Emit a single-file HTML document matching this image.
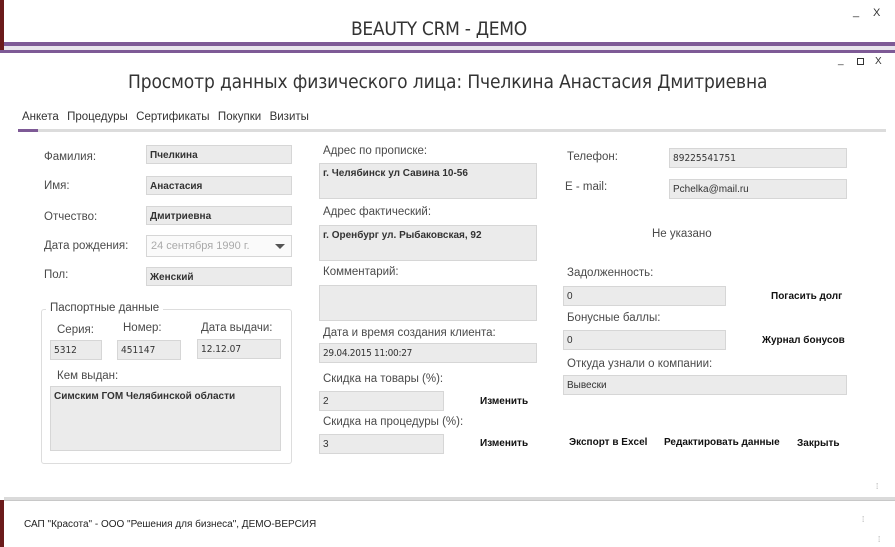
<!DOCTYPE html>
<html><head><meta charset="utf-8"><style>
*{margin:0;padding:0;box-sizing:border-box}
body{width:895px;height:547px;overflow:hidden;background:#fff;position:relative;font-family:"Liberation Sans","DejaVu Sans",sans-serif;color:#333}
.a{position:absolute;white-space:nowrap}
.l{position:absolute;font-size:11.5px;color:#4a4a4a;white-space:nowrap}
.f{position:absolute;background:#ebebeb;border:1px solid #d6d6d6;font-size:10px;font-weight:bold;color:#333;padding:4px 0 0 3px;white-space:nowrap;overflow:hidden}
.b{position:absolute;font-size:10px;font-weight:bold;color:#111;white-space:nowrap}
</style></head><body>
<div class="a" style="left:0;top:0;width:4px;height:50px;background:#6b1a1a"></div>
<div class="a" style="left:0;top:500px;width:4px;height:47px;background:#6b1a1a"></div>
<div class="a" style="left:4px;top:42px;width:891px;height:4px;background:#7e5a96"></div>
<div class="a" style="left:4px;top:46px;width:891px;height:4px;background:#e8e4ec"></div>
<div class="a" style="left:0;top:50px;width:895px;height:3px;background:#7e5a96"></div>
<div class="a" style="left:351px;top:18px;font-size:19px;letter-spacing:-0.3px;color:#333;font-family:'DejaVu Sans Condensed','Liberation Sans Narrow',sans-serif;font-weight:300">BEAUTY CRM - ДЕМО</div>
<div class="a" style="left:853px;top:6px;font-size:11px">_</div>
<div class="a" style="left:873px;top:7px;font-size:11px">X</div>
<div class="a" style="left:838px;top:55px;font-size:10px">_</div>
<div class="a" style="left:857px;top:58px;width:7px;height:7px;border:1px solid #333"></div>
<div class="a" style="left:875px;top:56px;font-size:10px">X</div>
<div class="a" style="left:128px;top:71px;font-size:19px;letter-spacing:-0.13px;color:#333;font-family:'DejaVu Sans Condensed','Liberation Sans Narrow',sans-serif;font-weight:300">Просмотр данных физического лица: Пчелкина Анастасия Дмитриевна</div>
<div class="a" style="left:22px;top:111px;font-size:11.5px;color:#333;word-spacing:1px">Анкета&nbsp; Процедуры&nbsp; Сертификаты&nbsp; Покупки&nbsp; Визиты</div>
<div class="a" style="left:18px;top:129px;width:868px;height:3px;background:#dcdcdc"></div>
<div class="a" style="left:18px;top:129px;width:20px;height:3px;background:#7e5a96"></div>

<div class="l" style="left:44px;top:151px">Фамилия:</div>
<div class="l" style="left:44px;top:180px">Имя:</div>
<div class="l" style="left:44px;top:211px">Отчество:</div>
<div class="l" style="left:44px;top:240px">Дата рождения:</div>
<div class="l" style="left:44px;top:269px">Пол:</div>
<div class="f" style="left:146px;top:145px;width:146px;height:19px">Пчелкина</div>
<div class="f" style="left:146px;top:176px;width:146px;height:19px">Анастасия</div>
<div class="f" style="left:146px;top:206px;width:146px;height:19px">Дмитриевна</div>
<div class="f" style="left:146px;top:235px;width:146px;height:22px;background:#fafafa;color:#aaa;font-weight:normal;font-size:11px;padding-top:4px;padding-left:4px">24 сентября 1990 г.</div>
<div class="a" style="left:275px;top:244px;border-left:5px solid transparent;border-right:5px solid transparent;border-top:5px solid #555"></div>
<div class="f" style="left:146px;top:267px;width:146px;height:19px">Женский</div>

<div class="a" style="left:41px;top:309px;width:251px;height:155px;border:1px solid #ddd;border-radius:3px"></div>
<div class="a" style="left:46px;top:302px;background:#fff;padding:0 4px;font-size:11.5px;color:#444">Паспортные данные</div>
<div class="l" style="left:57px;top:324px">Серия:</div>
<div class="l" style="left:123px;top:322px">Номер:</div>
<div class="l" style="left:201px;top:322px">Дата выдачи:</div>
<div class="f" style="left:50px;top:340px;width:52px;height:20px;font-weight:normal;font-family:'DejaVu Sans Condensed',sans-serif">5312</div>
<div class="f" style="left:117px;top:340px;width:64px;height:20px;font-weight:normal;font-family:'DejaVu Sans Condensed',sans-serif">451147</div>
<div class="f" style="left:197px;top:339px;width:84px;height:20px;font-weight:normal;font-family:'DejaVu Sans Condensed',sans-serif">12.12.07</div>
<div class="l" style="left:57px;top:370px">Кем выдан:</div>
<div class="f" style="left:50px;top:386px;width:231px;height:65px">Симским ГОМ Челябинской области</div>

<div class="l" style="left:323px;top:145px">Адрес по прописке:</div>
<div class="f" style="left:319px;top:163px;width:218px;height:36px">г. Челябинск ул Савина 10-56</div>
<div class="l" style="left:323px;top:206px">Адрес фактический:</div>
<div class="f" style="left:319px;top:225px;width:218px;height:36px">г. Оренбург ул. Рыбаковская, 92</div>
<div class="l" style="left:323px;top:266px">Комментарий:</div>
<div class="f" style="left:319px;top:285px;width:218px;height:36px"></div>
<div class="l" style="left:323px;top:327px">Дата и время создания клиента:</div>
<div class="f" style="left:319px;top:343px;width:218px;height:20px;font-weight:normal;font-family:'DejaVu Sans Condensed',sans-serif;letter-spacing:-0.3px">29.04.2015 11:00:27</div>
<div class="l" style="left:323px;top:373px">Скидка на товары (%):</div>
<div class="f" style="left:319px;top:391px;width:125px;height:20px;font-weight:normal">2</div>
<div class="l" style="left:323px;top:416px">Скидка на процедуры (%):</div>
<div class="f" style="left:319px;top:434px;width:125px;height:20px;font-weight:normal">3</div>
<div class="b" style="left:480px;top:396px">Изменить</div>
<div class="b" style="left:480px;top:438px">Изменить</div>

<div class="l" style="left:567px;top:151px">Телефон:</div>
<div class="l" style="left:565px;top:181px">E - mail:</div>
<div class="f" style="left:669px;top:148px;width:178px;height:20px;font-weight:normal;font-family:'DejaVu Sans Condensed',sans-serif">89225541751</div>
<div class="f" style="left:669px;top:179px;width:178px;height:20px;font-weight:normal">Pchelka@mail.ru</div>
<div class="l" style="left:652px;top:228px">Не указано</div>
<div class="l" style="left:567px;top:267px">Задолженность:</div>
<div class="f" style="left:563px;top:286px;width:163px;height:20px;font-weight:normal">0</div>
<div class="b" style="left:771px;top:291px">Погасить долг</div>
<div class="l" style="left:567px;top:312px">Бонусные баллы:</div>
<div class="f" style="left:563px;top:330px;width:163px;height:20px;font-weight:normal">0</div>
<div class="b" style="left:762px;top:335px">Журнал бонусов</div>
<div class="l" style="left:567px;top:358px">Откуда узнали о компании:</div>
<div class="f" style="left:563px;top:375px;width:284px;height:20px;font-weight:normal">Вывески</div>
<div class="b" style="left:569px;top:437px">Экспорт в Excel</div>
<div class="b" style="left:664px;top:437px">Редактировать данные</div>
<div class="b" style="left:797px;top:438px">Закрыть</div>

<div class="a" style="left:4px;top:497px;width:891px;height:4px;background:#dadada;border-bottom:1px solid #c8c8c8"></div>
<div class="a" style="left:24px;top:519px;font-size:10px;color:#222">САП "Красота" - ООО "Решения для бизнеса", ДЕМО-ВЕРСИЯ</div>
<div class="a" style="left:876px;top:482px;font-size:8px;color:#999">⁞</div>
<div class="a" style="left:862px;top:515px;font-size:8px;color:#999">⁞</div>
<div class="a" style="left:878px;top:535px;font-size:8px;color:#999">⁞</div>
</body></html>
